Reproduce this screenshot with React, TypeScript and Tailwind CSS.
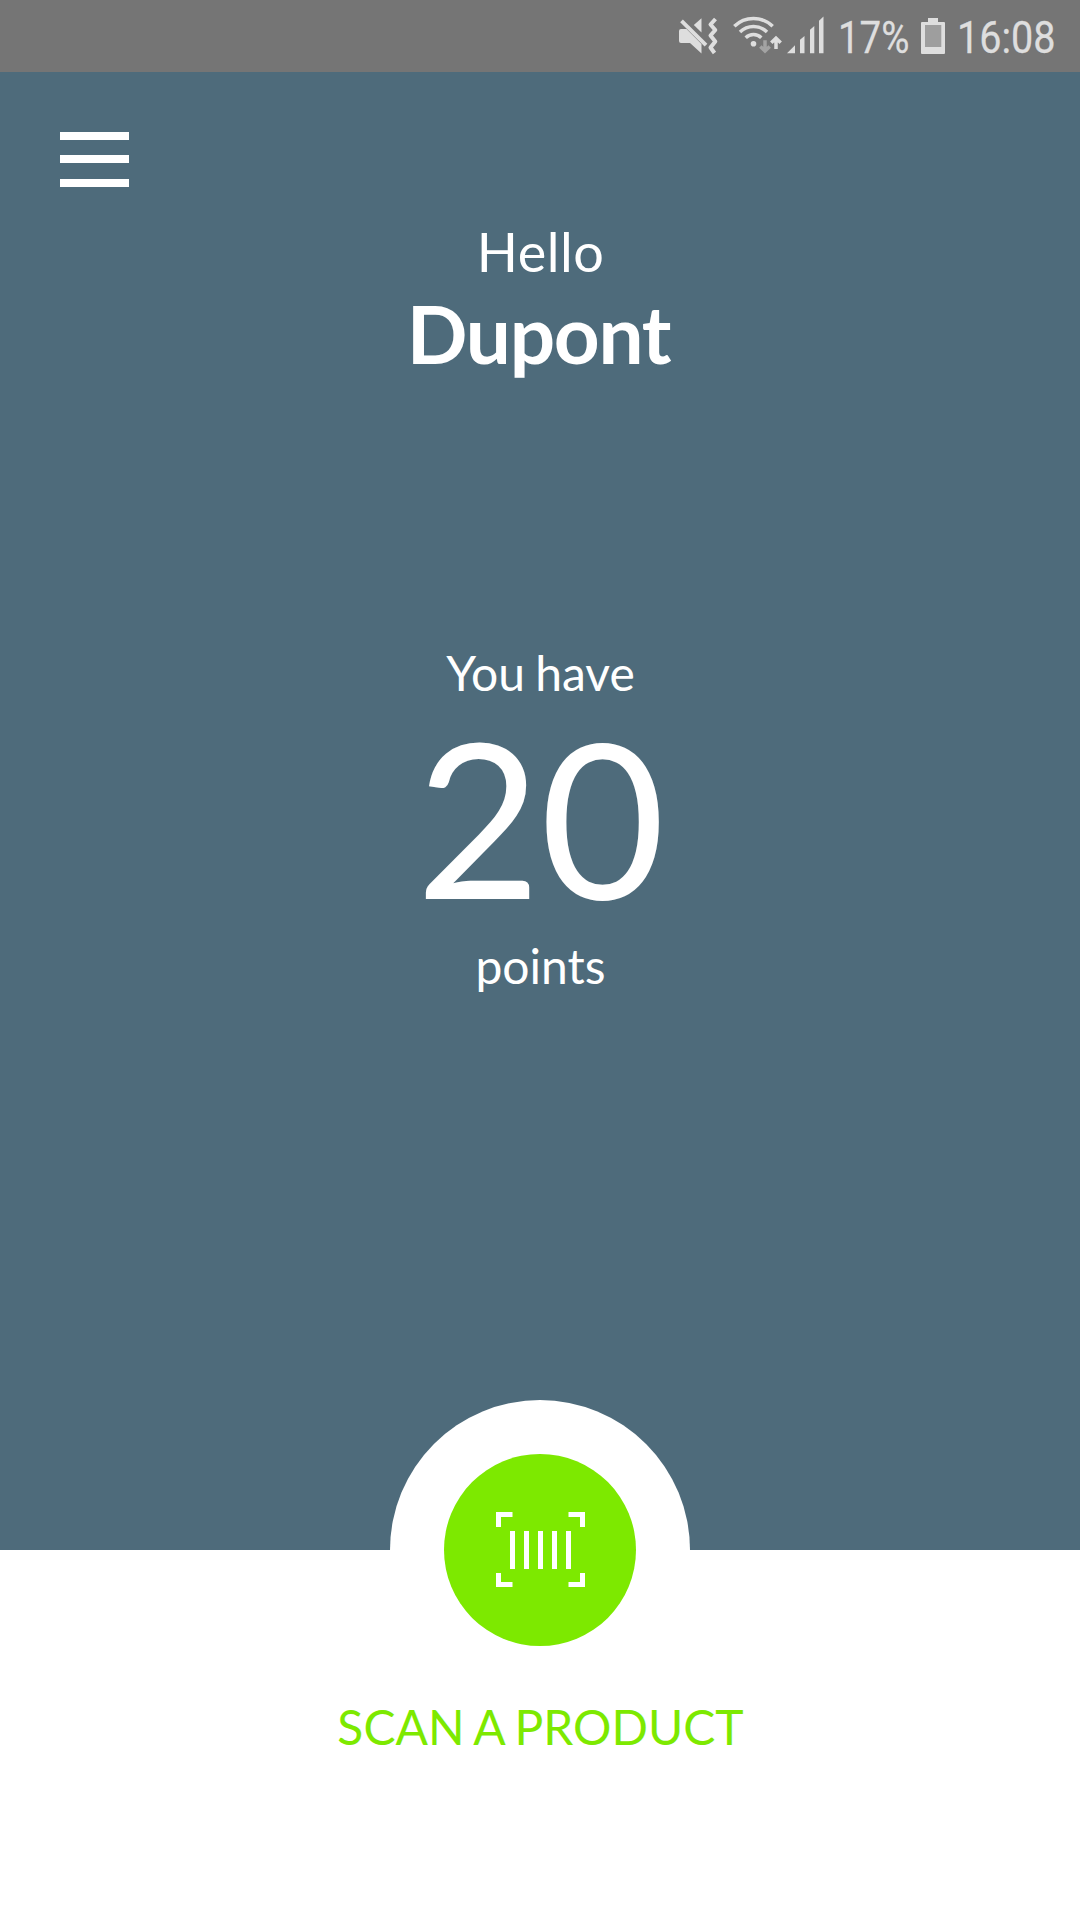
function MuteIcon() {
  return (
    <svg className="h-[40px] w-[40px] shrink-0" viewBox="678 16 40 40" fill="#dedede">
      <path d="M681 29h5.5L701.5 44v9.6L690 43h-9a2 2 0 0 1-2-2V31a2 2 0 0 1 2-2z" />
      <path d="M693.8 25l7.7-6.8v14.4z" />
      <path d="M681.5 20.8l24.5 24.4" stroke="#dedede" strokeWidth="3.8" />
      <path
        d="M715.5 19l-5 5.5 4.8 5.5-4.8 5.5 4.8 6-4.8 6 4 5.5"
        fill="none"
        stroke="#dedede"
        strokeWidth="4"
        strokeLinejoin="round"
      />
    </svg>
  );
}

function WifiIcon() {
  return (
    <svg className="h-[40px] w-[49px] shrink-0" viewBox="733 16 49 40" fill="none" stroke="#dedede" strokeWidth="3.5">
      <path d="M734.3 26.3a27.5 27.5 0 0 1 38.4 0" />
      <path d="M740 32a19.3 19.3 0 0 1 27 0" />
      <path d="M745.7 37.7a11.2 11.2 0 0 1 15.6 0" />
      <circle cx="753.5" cy="43.7" r="2.8" fill="#dedede" stroke="none" />
      <path d="M765 40.3v10M760.3 46.5l4.7 4.5 4.7-4.5" stroke="#a3a3a3" />
      <path d="M776 49V38.5M771.3 42.8l4.7-4.7 4.7 4.7" />
    </svg>
  );
}

function SignalIcon() {
  return (
    <svg className="h-[40px] w-[37px] shrink-0" viewBox="787 16 37 40" fill="#dedede">
      <path d="M787 53.2l8-8v8zM800 39.7l4.5-3.8v17.3H800zM810 29.7l4.3-3.8v27.3H810zM819 20.7l4.5-4.2v36.7H819z" />
    </svg>
  );
}

function BatteryIcon() {
  return (
    <svg className="h-[40px] w-[24px] shrink-0" viewBox="921 16 24 40" fill="#dedede">
      <path d="M928 18h10v4h6q1 0 1 1v30q0 1-1 1h-22q-1 0-1-1V23q0-1 1-1h6z" />
      <path d="M925 25h16.3v22H925z" fill="#9e9e9e" />
    </svg>
  );
}

function BarcodeIcon() {
  return (
    <svg className="h-[76px] w-[90px]" viewBox="0 0 90 76" fill="none" stroke="#fff" strokeWidth="5">
      <path d="M3.5 15V2.5h14M73.5 2.5h14V15M3.5 61v11.5h14M73.5 72.5h14V61" />
      <path d="M17.5 19v38M31.5 19v38M45.5 19v38M59.5 19v38M73.5 19v38" />
    </svg>
  );
}

function StatusBar() {
  return (
    <div className="flex h-[72px] items-start bg-[#757575] pt-[16px] pl-[678px] font-[Roboto,sans-serif] text-[45px] leading-[44px] text-[#dedede]">
      <MuteIcon />
      <div className="ml-[15px] flex">
        <WifiIcon />
      </div>
      <div className="ml-[5px] flex">
        <SignalIcon />
      </div>
      <div className="ml-[14px] w-[83px]">
        <span className="inline-block origin-left scale-x-[0.855] whitespace-nowrap [-webkit-text-stroke:0.3px]">17%</span>
      </div>
      <BatteryIcon />
      <div className="ml-[12px] w-[100px]">
        <span className="inline-block origin-left scale-x-[0.88] whitespace-nowrap [-webkit-text-stroke:0.3px]">16:08</span>
      </div>
    </div>
  );
}

export default function App() {
  return (
    <div className="flex h-[1920px] w-[1080px] flex-col overflow-hidden bg-white font-[Lato,sans-serif]">
      <StatusBar />

      {/* POINTS PANEL */}
      <main className="flex h-[1478px] flex-col items-center bg-[#4e6b7b] text-white">
        <button aria-label="Menu" className="mt-[60px] ml-[60px] flex flex-col self-start">
          <span className="h-[8px] w-[69px] bg-white" />
          <span className="mt-[15px] h-[8px] w-[69px] bg-white" />
          <span className="mt-[16px] h-[8px] w-[69px] bg-white" />
        </button>
        <div className="mt-[38px] pl-[1px] text-[54px] leading-none tracking-[0.5px]">Hello</div>
        <div className="mt-[14px] pr-[3px] text-[80px] leading-none font-bold tracking-[-1.3px]">Dupont</div>
        <div className="mt-[276px] pl-[1px] text-[48px] leading-none [word-spacing:-2px]">You have</div>
        <div className="mt-[11px] text-[216px] leading-none tracking-[-1px]">20</div>
        <div className="mt-[18px] pl-[1px] text-[48px] leading-none">points</div>
        <div className="mt-auto h-[150px] w-[300px] rounded-t-full bg-white" />
      </main>
      {/* END POINTS PANEL */}

      {/* SCAN */}
      <footer className="flex flex-col items-center">
        <button
          aria-label="Scan"
          className="-mt-[96px] flex h-[192px] w-[192px] items-center justify-center rounded-full bg-[#7de900]"
        >
          <BarcodeIcon />
        </button>
        <div className="mt-[57px] pl-[1px] text-[48px] leading-none text-[#7de900] [word-spacing:-2px]">
          SCAN A PRODUCT
        </div>
      </footer>
      {/* END SCAN */}
    </div>
  );
}
